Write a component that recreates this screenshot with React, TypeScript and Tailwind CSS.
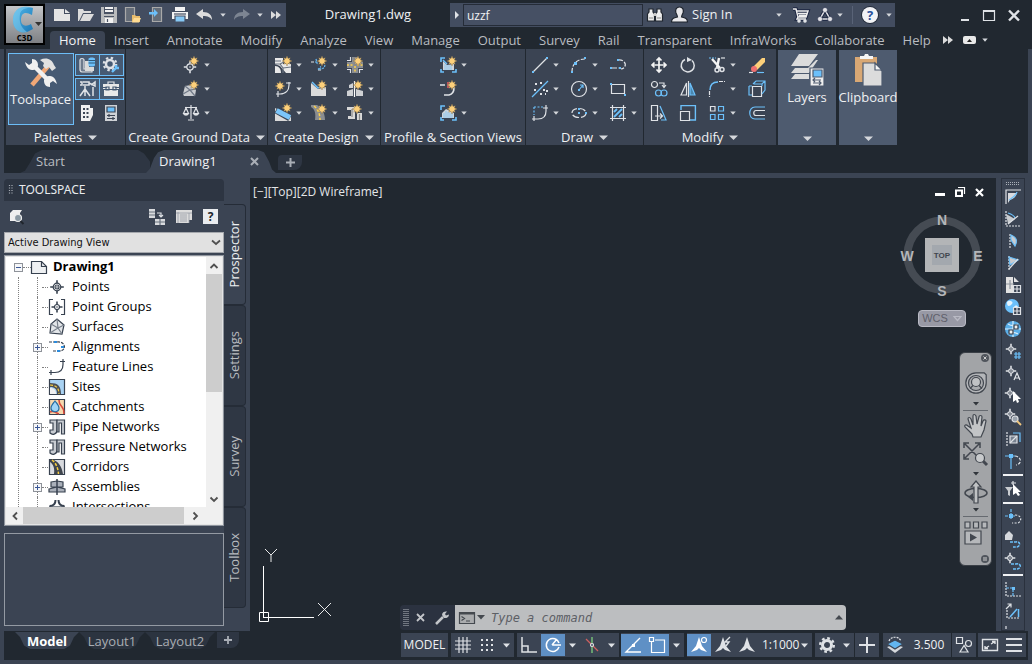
import React from "react";
import clsx from "clsx";

type Kids = { children?: React.ReactNode };

const W = "#dfe2e6";
const B = "#6cc0fa";
const Y = "#fdd07a";

function Svg({ w = 16, h = 16, children }: Kids & { w?: number; h?: number }) {
  return (
    <svg width={w} height={h} viewBox={`0 0 ${w} ${h}`} fill="none" stroke={W} strokeWidth={1.2} className="shrink-0 overflow-visible" aria-hidden="true">
      {children}
    </svg>
  );
}

function Spark({ x = 11, y = 4 }: { x?: number; y?: number }) {
  return (
    <g transform={`translate(${x} ${y})`} stroke="none">
      <path d="M0-5 1-2.4 3.2-3.2 2.4-1 5 0 2.4 1 3.2 3.2 1 2.4 0 5-1 2.4-3.2 3.2-2.4 1-5 0-2.4-1-3.2-3.2-1-2.4Z" fill={Y} stroke="#7d6a48" strokeWidth={0.4} />
    </g>
  );
}

function Caret({ big = false }: { big?: boolean }) {
  return big ? (
    <svg width="9" height="5" viewBox="0 0 9 5" className="shrink-0" aria-hidden="true">
      <path d="M0 .5h9L4.500 5Z" fill="#d5d8dc" />
    </svg>
  ) : (
    <svg width="6" height="4" viewBox="0 0 6 4" className="shrink-0" aria-hidden="true">
      <path d="M.3.5h5.400L3 3.800Z" fill="#d5d8dc" />
    </svg>
  );
}

function IconButton({ label, children, className }: Kids & { label: string; className?: string }) {
  return (
    <button type="button" aria-label={label} className={clsx("flex shrink-0 items-center justify-center", className)}>
      {children}
    </button>
  );
}

/* ---------- shared point marker ---------- */
function Target({ x, y, r = 3, c = W }: { x: number; y: number; r?: number; c?: string }) {
  return (
    <g stroke={c} fill="none" transform={`translate(${x} ${y})`}>
      <circle r={r} />
      <path d={`M0 ${-r - 3}v3M0 ${r}v3M${-r - 3} 0h3M${r} 0h3`} strokeWidth={1.6} />
      <circle r={0.8} fill={c} stroke="none" />
    </g>
  );
}

/* ---------- quick access ---------- */
const quickIcons: { label: string; icon: React.ReactNode }[] = [
  { label: "New", icon: <Svg><path d="M0 2h10v5h6v7H0Z" fill="#e4e4e4" stroke="none" /><path d="m11 2 5 4h-5Z" fill="#e4e4e4" stroke="none" /></Svg> },
  { label: "Open", icon: <Svg><path d="M0 14V2h5l1 2h7v2H5L1 14Z" fill="#dcdcdc" stroke="none" /><path d="M5.500 7H16l-4 7H2Z" fill="#dcdcdc" stroke="none" /></Svg> },
  { label: "Save", icon: <Svg><path d="M0 0h16v16H0Z" fill="#b9bbbd" stroke="none" /><path d="M3 0h10v7H3Z" fill="#4a5364" stroke="none" /><path d="M4 0h8v2H4Zm0 3h8v2H4ZM4 11h8v5H4Z" fill="#f2f2f2" stroke="none" /><path d="M3 9.500h10M6.500 12v3" stroke="#4a5364" /></Svg> },
  { label: "Open from Web and Mobile", icon: <Svg><path d="M.5.500h9v14h-9Z" fill="#656d78" stroke="#a9a9a9" /><path d="M7 8h3l1 1h4v6H7Z" fill="#e9bd6c" stroke="none" /><path d="M9 11h7l-2 4.500H7Z" fill="#ffdc93" stroke="none" /></Svg> },
  { label: "Save to Web and Mobile", icon: <Svg><path d="M3.500.500h9v14h-9Z" fill="#656d78" stroke="#a9a9a9" /><path d="M0 5h5V2l4 4-4 4V7.500H0Z" fill="#6cc0fa" stroke="none" /></Svg> },
  { label: "Plot", icon: <Svg><path d="M3 0h10v4H3ZM0 5h16v7H0Z" fill="#f3f3f3" stroke="none" /><path d="M3 9h10v6H3Z" fill="#86c8f5" stroke="#465064" /><path d="M2 7h12" stroke="#465064" /></Svg> },
  { label: "Undo", icon: <Svg><path d="M0 7 7 2v3c6 0 9 3 9 8-2-3-4-4-9-4v3Z" fill="#dcdcdc" stroke="none" /></Svg> },
  { label: "Undo history", icon: <Caret /> },
  { label: "Redo", icon: <Svg><path d="M16 7 9 2v3C3 5 0 8 0 13c2-3 4-4 9-4v3Z" fill="#7d8592" stroke="none" /></Svg> },
  { label: "Redo history", icon: <Caret /> },
];

function DoubleArrow() {
  return <Svg w={10} h={8}><path d="M0 0 5 4 0 8ZM5 0l5 4-5 4Z" fill="#dcdcdc" stroke="none" /></Svg>;
}

function TitleBar() {
  return (
    <div className="flex h-7 items-center pt-[2px]">
      <div className="flex h-6 w-[241px] shrink-0 items-center justify-between bg-[#434d60] pr-[5px] pl-[9px]">
        {quickIcons.map((q) => (
          <IconButton key={q.label} label={q.label}>{q.icon}</IconButton>
        ))}
        <IconButton label="More commands"><DoubleArrow /></IconButton>
      </div>
      <h1 className="min-w-0 flex-1 text-center text-[13px] text-[#eef0f2]">Drawing1.dwg</h1>
      <div className="flex h-6 w-[445px] shrink-0 items-center bg-[#434d60]">
        <IconButton label="Expand search" className="w-[13px]">
          <Svg w={4} h={8}><path d="M0 0 4 4 0 8Z" fill={W} stroke="none" /></Svg>
        </IconButton>
        <input aria-label="Search" defaultValue="uzzf" className="h-[22px] w-[180px] border border-[#252c38] bg-[#465064] px-[3px] text-[12px] text-[#eef0f2] outline-none" />
        <IconButton label="Find" className="ml-1">
          <Svg w={16}>
            <path d="M2 2h4v3l1.500 2v7H.5V7L2 5ZM10 2h4v3l1.500 2v7H8.500V7L10 5Z" fill="#eee" stroke="#20262f" />
            <path d="M7 6h2v3H7Z" fill="#ccc" stroke="none" /><path d="M2 11h4M10 11h4" stroke="#888" />
          </Svg>
        </IconButton>
        <button type="button" className="ml-2 flex items-center gap-1 text-[13px] text-[#eef0f2]">
          <Svg w={17}><path d="M8.500 0C12 0 13 3 12 6c-1 2-1.500 3-1.500 4 4 1 6 1.500 6 5H.5c0-3.500 2-4 6-5 0-1-.5-2-1.500-4C4 3 5 0 8.500 0Z" fill="#e9e9ec" stroke="#20262f" /></Svg>
          Sign In
        </button>
        <div className="ml-auto flex items-center">
          <IconButton label="Account menu"><Caret /></IconButton>
          <IconButton label="App store" className="ml-[10px]">
            <Svg w={17}><path d="M1 2h3l2 8h8l2-6H5M6 10l-1 2h9" stroke="#1b2440" strokeWidth={3.500} /><path d="M1 2h3l2 8h8l2-6H5M6 10l-1 2h9M6 6.500h9M7 8.500h7" stroke="#eee" strokeWidth={1.500} /><circle cx="7" cy="14" r="1.200" fill="#eee" /><circle cx="13" cy="14" r="1.200" fill="#eee" /></Svg>
          </IconButton>
          <IconButton label="Stay connected" className="ml-2">
            <Svg w={16}><path d="m8 3-5 9h10Z" stroke="#1b2440" strokeWidth={3.500} /><path d="m8 3-5 9h10Z" stroke="#e4e4e8" strokeWidth={1.500} /><g fill="#e4e4e8" stroke="#1b2440" strokeWidth=".5"><circle cx="8" cy="3" r="2.500" /><circle cx="3" cy="12" r="2.500" /><circle cx="13" cy="12" r="2.500" /></g></Svg>
          </IconButton>
          <IconButton label="Connection menu" className="ml-1"><Caret /></IconButton>
          <span className="mx-[9px] h-[18px] w-px bg-[#596377]" />
          <IconButton label="Help" className="h-4 w-4 rounded-full bg-[#f2f3f6] text-[13px] leading-none font-bold text-[#27509c] ring-1 ring-[#232b3a]">?</IconButton>
          <IconButton label="Help menu" className="mr-[3px] ml-2"><Caret /></IconButton>
        </div>
      </div>
      <div className="ml-[66px] flex shrink-0 items-center gap-[13px] pr-3">
        <IconButton label="Minimize"><Svg w={9} h={12}><path d="M0 11h8" strokeWidth={2} /></Svg></IconButton>
        <IconButton label="Maximize"><Svg w={12} h={11}><path d="M.5 0v10.500h11V0" /><path d="M0 1h12" strokeWidth={2} /></Svg></IconButton>
        <IconButton label="Close"><Svg w={12} h={11}><path d="m1 .5 10 10M11 .5l-10 10" strokeWidth={2.400} /></Svg></IconButton>
      </div>
    </div>
  );
}

const ribbonTabs = ["Home", "Insert", "Annotate", "Modify", "Analyze", "View", "Manage", "Output", "Survey", "Rail", "Transparent", "InfraWorks", "Collaborate", "Help"];

function RibbonTabs() {
  return (
    <nav className="flex h-[21px] items-end pl-[5px] text-[13px]">
      {ribbonTabs.map((t, i) => (
        <button
          type="button"
          key={t}
          className={clsx("h-[18px] shrink-0 px-[9px] leading-[17px]", i === 0 ? "rounded-t-sm bg-[#3b4453] text-[#f2f3f5]" : "text-[#b9bcc0]")}
        >
          {t}
        </button>
      ))}
      <div className="ml-[3px] flex h-[18px] items-center gap-[10px] pb-px">
        <IconButton label="More tabs"><DoubleArrow /></IconButton>
        <IconButton label="Ribbon display"><Svg w={13} h={8}><rect width="13" height="8" rx="2" fill="#e8e8e8" stroke="none" /><path d="M4 6h5L6.500 3Z" fill="#222" stroke="none" /></Svg></IconButton>
        <IconButton label="Ribbon display menu" className="-ml-1"><Caret /></IconButton>
      </div>
    </nav>
  );
}

/* ---------- ribbon icons ---------- */
const ic = {
  points: <Svg><Target x={7} y={10} r={3.200} /><Spark x={11} y={4} /></Svg>,
  surface: <Svg><path d="m0 13 2-8 6-1 5 5-1 6H1Z" fill="#c9ccd0" stroke="none" /><path d="m0 13 7-4 5 6M2 5l5 4 6-1" stroke="#707987" /><Spark x={11} y={4} /></Svg>,
  scales: <Svg><path d="M8 0v14M2 2.500h12M5 15h6M3 3 .5 8.500h5ZM13 3l-2.500 5.500h5Z" /><path d="M0 8.500h6c-1 3-5 3-6 0ZM10 8.500h6c-1 3-5 3-6 0Z" fill={W} stroke="none" /></Svg>,
  parcel: <Svg><path d="M0 1h8v6h8v9h-5L5 9 0 7Z" fill="#e8e8e8" stroke="none" /><path d="M0 7h5l3 4v5M0 4h6M5 7l4-2M8 11l8-1" stroke="#6b7482" /><path d="M0 9c4 0 6 3 6 7H0Z" fill="#e8e8e8" stroke="none" /><Spark x={12} y={4} /></Svg>,
  featureNew: <Svg><path d="M1 13h4c6 0 9-4 9-9V1M3 10v6M11 2h5" /><Spark x={5} y={5} /></Svg>,
  grading: <Svg><path d="M0 3 16 11v5H0Z" fill="#dadada" stroke="none" /><path d="m1 5 14 8" stroke="#3b4453" strokeWidth={7} /><path d="m1.500 5.500 13.500 7" stroke="#7cc6fa" strokeWidth={5} /><Spark x={12} y={3} /></Svg>,
  alignment: <Svg><path d="M0 5h3M7 13h3" /><path d="M4 5h3M5 2l1.500 6M8 12c4 0 6-1 6-5M7 12.500l3-3" stroke={B} strokeDasharray="2 1" /><Spark x={11} y={4} /></Svg>,
  profile: <Svg><path d="M0 2l7 6 8-2v9H0Z" fill="#dadada" stroke="none" /><path d="m1 1 6 6 6-4" stroke={B} strokeWidth={1.500} /><Spark x={11} y={4} /></Svg>,
  corridor: <Svg><path d="M0 0h6c5 3 8 8 8 15H4C5 9 4 4 0 2Z" fill="#8a8d91" stroke="none" /><path d="M3 1c4 3 6 8 6 14" stroke="#fdd04a" strokeDasharray="3 1.500" strokeWidth={1.500} /><Spark x={11} y={4} /></Svg>,
  cross: <Svg><path d="M5 0h6v16H5ZM0 5h16v6H0Z" fill="#8a8d91" stroke="none" /><path d="M0 3.500h3.500V0M12.500 16v-3.500H16M3.500 16v-3.500H0" /><path d="M8 9v7M0 8h7M10 8h6" stroke="#fdd04a" strokeDasharray="2 1.500" strokeWidth={1.500} /><Spark x={11} y={4} /></Svg>,
  assembly: <Svg><path d="M2 4l4-2v5H2ZM0 10l6-2v7H0ZM9 8l7 2v5H9Z" fill="#cfd1d4" stroke="none" /><path d="M7.500 0v16" stroke="#fff" /><Spark x={11} y={4} /></Svg>,
  pipes: <Svg><path d="M0 2h8v12H1v-3h3V5H0ZM10 8h5v7h-5Z" fill="#d9d9d9" stroke="none" /><path d="M5 4v8M12.500 9v6" stroke="#888" /><Spark x={10} y={4} /></Svg>,
  profView: <Svg><path d="M1 5V1h4M1 12v3h3M12 15h4v-3" stroke={B} strokeWidth={1.600} /><path d="m3 4 4 4 7-1v6H3Z" fill="#d0d5da" stroke="none" /><path d="M5 7v6M7 8v5M9 8v5M11 8v5" stroke={B} strokeWidth={0.700} /><path d="m3 3 4 4" stroke={B} /><Spark x={12} y={4} /></Svg>,
  sample: <Svg><path d="M0 4h5M14 7c0 4-1 6-5 7H4" strokeWidth={1.600} /><path d="M8 1v6" stroke="#e0585d" strokeWidth={1.600} /><Spark x={12} y={4} /></Svg>,
  section: <Svg><path d="M1 5V1h4M1 12v3h3M12 15h4v-3" stroke={B} strokeWidth={1.600} /><path d="M2 13V8l4-4 8 4v5Z" fill="#d0d5da" stroke="none" /><path d="M4 8v5M6 6v7M8 7v6M10 8v5M12 8v5" stroke={B} strokeWidth={0.700} /><Spark x={12} y={4} /></Svg>,
  line: <Svg><path d="M1 15 15 1" /><path d="M0 14h2v2H0ZM14 0h2v2h-2Z" fill={B} stroke="none" /></Svg>,
  points3: <Svg><path d="M0 16 16 0" stroke={B} /><path d="M2 8h2v2H2Zm6-7h2v2H8Zm-5 1h2v2H3Zm8 6h2v2h-2Zm3 1h2v2h-2ZM8 12h2v2H8Zm5 0h1v2h-1Z" fill={W} stroke="none" /></Svg>,
  fillet0: <Svg><path d="M2 2v8M2 2h9" stroke={B} strokeDasharray="2 1.500" /><path d="M0 14h6c5 0 8-3 8-8V0M11 3h5M2 11v5" /></Svg>,
  arc: <Svg><path d="M1 15C1 7 6 2 14 2" strokeDasharray="4 1.500" /><path d="M0 14h2v2H0ZM3 5h3v3H3Zm10-5h2v2h-2Z" fill={B} stroke="none" /></Svg>,
  circle: <Svg><circle cx="8" cy="8" r="7.500" /><path d="m8 9 4-5M9 4h3v3" stroke={B} /><path d="M7 8h2v2H7Z" fill={B} stroke="none" /></Svg>,
  ellipse: <Svg><ellipse cx="8" cy="8" rx="7" ry="4.500" strokeDasharray="7 2" /><path d="M7 3h2v2H7Zm0 4h2v2H7Zm7 0h2v2h-2Z" fill={B} stroke="none" /></Svg>,
  polyline: <Svg><path d="M2 11h9M8 3c8-1 10 8 3 9" strokeDasharray="5 1.500" /><path d="M0 10h2v2H0Zm9 0h2v2H9ZM7 2h2v2H7Z" fill={B} stroke="none" /></Svg>,
  rect: <Svg><path d="M1.500 3.500h13v9h-13Z" /><path d="M0 2h2v2H0Zm14 11h2v2h-2Z" fill={B} stroke="none" /></Svg>,
  hatch: <Svg><path d="M2.500 0v16M13.500 0v16M0 2.500h16M0 13.500h16" /><path d="m4 7 3-3M4 12l8-8M9 12l3-3" stroke={B} strokeWidth={1.800} /></Svg>,
  move: <Svg><path d="M8 1v14M1 8h14M5.500 3.500 8 1l2.500 2.500M5.500 12.500 8 15l2.500-2.500M3.500 5.500 1 8l2.500 2.500M12.500 5.500 15 8l-2.500 2.500" stroke="#f4f4f4" strokeWidth={1.700} /></Svg>,
  rotate: <Svg><path d="M5 2.500a6.500 6.500 0 1 0 7 1" strokeWidth={1.500} /><path d="m7 0 5 3-5 2Z" fill={W} stroke="none" /></Svg>,
  trim: <Svg><path d="M0 1h7" stroke={B} strokeDasharray="2 1" /><path d="M12 1h4" /><path d="M3 2l8 9M10 1l-2 10" stroke="#f4f4f4" strokeWidth={2.400} /><circle cx="8" cy="13" r="2" strokeWidth={1.500} /><circle cx="13" cy="12.500" r="2" strokeWidth={1.500} /></Svg>,
  erase: <Svg><path d="m4 10 9-9 3 0v4l-8 8Z" fill="#fdd07a" stroke="none" /><circle cx="5" cy="12" r="3" fill="#ee6f70" stroke="none" /><path d="M0 15.500h4" /><path d="M8 15.500h7" stroke={B} /></Svg>,
  copy: <Svg><circle cx="3.500" cy="3.500" r="3" /><path d="M8 2h5v4M11 4l2 2.500L15 4" /><circle cx="7.500" cy="12" r="3" stroke={B} /><circle cx="13" cy="12" r="3" stroke={B} /></Svg>,
  mirror: <Svg><path d="M6.500 2 1 14h5.500ZM8.500 0v16" /><path d="m10 2 5 12h-5Z" stroke={B} fill="#4b86ad" /></Svg>,
  filletM: <Svg><path d="M1 9C1 4 4 1 9 1" stroke={B} strokeWidth={1.500} /><path d="M10 .5h6M.5 10v6" strokeDasharray="4 1" /></Svg>,
  explode: <Svg><path d="M3.500 5.500h9v10h-9Z" /><path d="M0 5h3M0 5v9h3M4 3l3-3h9v9l-3 4M5 3h8l3-3M13 3v2" stroke={B} /></Svg>,
  stretch: <Svg><path d="M.5.500h6v15h-6ZM4 11h7M9 8.500l2.500 2.500L9 13.500" /><path d="m9 1 6 14h-5" stroke={B} /></Svg>,
  scale: <Svg><path d="M1 5V.6h14.400V15H10" stroke={B} strokeWidth={1.400} /><path d="M.5 6.500h9v9h-9Z" /></Svg>,
  array: <Svg w={16}><path d="M1.500 1.500h4.500v4.500h-4.500Z" /><path d="M9.500 1.500h5v4.500h-5ZM1.500 9.500h4.500v5h-4.500ZM9.500 9.500h5v5h-5Z" stroke={B} /></Svg>,
  offset: <Svg><path d="M16 2H6C-1 2-1 14 6 14h10" stroke={B} /><path d="M16 5.500H7c-3 0-3 5 0 5h9" /></Svg>,
  planset: <Svg><path d="M1 3c0-2 4-2 4 0v9h8v3H3c-2 0-2-2-2-3Z" stroke={W} fill="#6d7a8c" /><path d="M6 4h4v6h5v4H6Z" fill="#dadada" stroke="none" /><path d="M9.500 2c0-2 6.500-2 6.500 0v6c0 2-6.500 2-6.500 0Z" fill={B} stroke="none" /><path d="M9.500 3.500h6.500M9.500 6h6.500" stroke="#315a7a" /></Svg>,
  gear: <Svg><circle cx="7" cy="7" r="4" strokeWidth={2.500} /><circle cx="7" cy="7" r="6.200" strokeWidth={2.200} strokeDasharray="2.400 2.470" /><path d="m9 15 5-5M13 8v3h3" stroke={B} strokeWidth={2.400} /></Svg>,
  survey: <Svg><path d="M1 1h2v3H1M4 1h6v3H4M6 5v3M6 8 1 15M6 8l5 7M6 8v7M10 2l6 3V1l-4 3M14 6v9" strokeWidth={1.500} /></Svg>,
  toolbox: <Svg><path d="M5 3V1h6v2" /><path d="M0 3h16v5H0ZM1 9h14v6H1Z" fill="#e8e8e8" stroke="none" /><path d="M0 6.500h4M12 6.500h4M3 6h3v3H3ZM10 6h3v3h-3Z" stroke="#465a73" /></Svg>,
  report: <Svg><path d="M2 0h9v3h3v7l-3 6H2Z" fill="#f0f0f0" stroke="none" /><path d="M4 4h2M7.500 4h2M4 8h2M7.500 8h2M4 12h2M7.500 12h2" stroke="#3b4453" strokeWidth={2} /></Svg>,
  props: <Svg><path d="M2 0h12v16H2Z" fill="#cfd2d6" stroke="none" /><path d="M4 2h8v5H4Z" fill={B} stroke="#3b4453" /><path d="M4 10.500h8M4 13.500h8M6 9v3M10 12v3" stroke="#3b4453" /></Svg>,
};

type Tool = { name: string; icon: React.ReactNode; menu?: boolean };

function ToolCell({ tool }: { tool: Tool }) {
  return (
    <div className="flex h-6 items-center gap-[5px]">
      <IconButton label={tool.name}>{tool.icon}</IconButton>
      {tool.menu && <IconButton label={`${tool.name} options`}><Caret /></IconButton>}
    </div>
  );
}

function Panel({ title, menu = true, children, className }: Kids & { title: string; menu?: boolean; className?: string }) {
  return (
    <section className={clsx("flex h-24 shrink-0 flex-col bg-[#3b4453] pt-1", className)}>
      <div className="flex h-[72px] justify-center">{children}</div>
      <button type="button" className="flex h-5 items-center justify-center gap-[6px] pt-1 text-[13px] leading-4 whitespace-nowrap text-[#eef0f2]">
        {title}
        {menu && <Caret big />}
      </button>
    </section>
  );
}

const t = (name: string, icon: React.ReactNode, menu = true): Tool => ({ name, icon, menu });

const ground = [[t("Points", ic.points), t("Surfaces", ic.surface), t("Traverse", ic.scales)]];
const design = [
  [t("Parcel", ic.parcel), t("Feature Line", ic.featureNew), t("Grading", ic.grading)],
  [t("Alignment", ic.alignment), t("Profile", ic.profile), t("Corridor", ic.corridor)],
  [t("Intersections", ic.cross), t("Assembly", ic.assembly), t("Pipe Network", ic.pipes)],
];
const views = [[t("Profile View", ic.profView), t("Sample Lines", ic.sample, false), t("Section Views", ic.section)]];
const draw = [
  [t("Line", ic.line), t("Construction", ic.points3), t("Polycurve", ic.fillet0)],
  [t("Arc", ic.arc), t("Circle", ic.circle), t("Ellipse", ic.ellipse)],
  [t("Polyline", ic.polyline, false), t("Rectangle", ic.rect), t("Hatch", ic.hatch)],
];
const modify = [
  [t("Move", ic.move, false), t("Copy", ic.copy, false), t("Stretch", ic.stretch, false)],
  [t("Rotate", ic.rotate, false), t("Mirror", ic.mirror, false), t("Scale", ic.scale, false)],
  [t("Trim", ic.trim), t("Fillet", ic.filletM), t("Array", ic.array)],
  [t("Erase", ic.erase, false), t("Explode", ic.explode, false), t("Offset", ic.offset, false)],
];

function ToolColumns({ columns, className }: { columns: Tool[][]; className?: string }) {
  return (
    <div className={clsx("flex", className)}>
      {columns.map((col, i) => (
        <div key={i}>{col.map((tool) => <ToolCell key={tool.name} tool={tool} />)}</div>
      ))}
    </div>
  );
}

function SmallTool({ label, on, children }: Kids & { label: string; on?: boolean }) {
  return (
    <IconButton label={label} className={clsx("-ml-px h-[22px] w-[25px]", on && "border border-[#6cbdf7] bg-[#465a73]")}>
      {children}
    </IconButton>
  );
}

function TallPanel({ title, children }: Kids & { title: string }) {
  return (
    <button type="button" className="flex h-[95px] w-[58px] shrink-0 flex-col items-center bg-[#4e5b6f] pt-1 pb-1 text-[13px] text-[#eef0f2]">
      {children}
      <span className="mt-px leading-5">{title}</span>
      <span className="mt-auto"><Caret big /></span>
    </button>
  );
}

function Ribbon() {
  return (
    <div className="flex gap-px border-x-4 border-[#3b4453] pl-[2px]">
      <Panel title="Palettes" className="w-[119px]">
        <button type="button" className="flex w-[66px] flex-col items-center border border-[#6cbdf7] bg-[#465a73] pt-[3px] text-[13px] text-[#eef0f2]">
          <Svg w={32} h={32}>
            <path d="M7 28 24 8" stroke="#f1a877" strokeWidth={4.500} />
            <path d="M15 3c6-3 12-1 14 5l2 3-4 3-3-4-3 2-3-3 1-3Z" fill="#e1e1e1" stroke="none" />
            <path d="m8 8 16 16" stroke="#f0f0f0" strokeWidth={4.500} />
            <path d="M0 5l4 3 3-2 0-4c4 0 6 3 6 6 0 3-3 5-6 5-4 0-6-4-7-8ZM32 27l-4-3-3 2 0 4c-4 0-6-3-6-6 0-3 3-5 6-5 4 0 6 4 7 8Z" fill="#f0f0f0" stroke="none" />
          </Svg>
          <span className="leading-5">Toolspace</span>
        </button>
        <div className="ml-[2px] grid grid-cols-2 content-start gap-y-[2px] pt-px">
          <SmallTool label="Sheet set" on>{ic.planset}</SmallTool>
          <SmallTool label="Settings" on>{ic.gear}</SmallTool>
          <SmallTool label="Survey" on>{ic.survey}</SmallTool>
          <SmallTool label="Toolbox" on>{ic.toolbox}</SmallTool>
          <SmallTool label="Panorama">{ic.report}</SmallTool>
          <SmallTool label="Properties">{ic.props}</SmallTool>
        </div>
      </Panel>
      <Panel title="Create Ground Data" className="w-[141px]"><ToolColumns columns={ground} /></Panel>
      <Panel title="Create Design" className="w-[112px]"><ToolColumns columns={design} className="gap-[9px]" /></Panel>
      <Panel title="Profile & Section Views" menu={false} className="w-[144px]"><ToolColumns columns={views} /></Panel>
      <Panel title="Draw" className="w-[117px]"><ToolColumns columns={draw} className="gap-3" /></Panel>
      <Panel title="Modify" className="w-[132px]"><ToolColumns columns={modify} className="gap-[13px] pr-1" /></Panel>
      <div className="flex gap-[3px] pt-px pl-px">
        <TallPanel title="Layers">
          <Svg w={33} h={32}>
            <path d="M8 0h19l-9 12H0ZM4 14l-4 5h18l9-13h-2L17 14ZM4 20l-4 5h18V20Z" fill="#dcdcdc" stroke="none" />
            <path d="M19 14h14v18H19Z" fill="#eee" stroke="#4e5b6f" />
            <path d="M22 16h9v7h-9Z" fill={B} stroke="#4e5b6f" />
            <path d="M22 26h8M22 29h8M24 24l-2 2 2 2M28 27l2 2-2 2" stroke="#4e5b6f" />
          </Svg>
        </TallPanel>
        <TallPanel title="Clipboard">
          <Svg w={27} h={32}>
            <path d="M0 3h22v25H0Z" fill="#d9a874" stroke="none" /><path d="M5 5V2h4l1-2h3l1 2h4v3Z" fill="#f5f5f5" stroke="none" />
            <path d="M8 9h12l7 8v15H8Z" fill="#dcdcdc" stroke="#4e5b6f" /><path d="M20 9v7h7Z" fill="#f7f7f7" stroke="#4e5b6f" />
          </Svg>
        </TallPanel>
      </div>
    </div>
  );
}

/* ---------- drawing tabs ---------- */
function FileTabs() {
  return (
    <div className="mx-1 flex h-7 items-end bg-[#212830] pl-4 text-[13px]">
      <button type="button" className="h-[23px] w-[130px] bg-[#2e3643] pl-4 text-left text-[#b9bcc0] [clip-path:polygon(0_100%,5px_90%,10px_55%,15px_15%,22px_0,118px_0,124px_15%,130px_50%,130px_100%)]">Start</button>
      <div className="-ml-1 flex h-[23px] w-[130px] items-center bg-[#3b4453] pl-[13px] text-[#f0f1f3] [clip-path:polygon(0_100%,4px_80%,8px_35%,12px_10%,18px_0,112px_0,118px_10%,123px_50%,126px_85%,130px_100%)]">
        <button type="button" className="flex-1 text-left">Drawing1</button>
        <IconButton label="Close drawing" className="mr-[17px]"><Svg w={9} h={9}><path d="m1 1 7 7M8 1 1 8" stroke="#a9aeb6" strokeWidth={2} /></Svg></IconButton>
      </div>
      <IconButton label="New tab" className="mb-[3px] ml-[2px] h-[15px] w-6 rounded-tl rounded-br-lg bg-[#2e3643]"><Svg w={9} h={9}><path d="M4.500 0v9M0 4.500h9" stroke="#a9aeb6" strokeWidth={2} /></Svg></IconButton>
    </div>
  );
}

/* ---------- toolspace ---------- */
const K = "#37414f";
const treeItems: { label: string; box?: boolean; icon: React.ReactNode }[] = [
  { label: "Points", icon: <Svg><Target x={8} y={8} r={3.800} c={K} /><circle cx="8" cy="8" r="2" stroke={K} /></Svg> },
  { label: "Point Groups", icon: <Svg><path d="M4 .5H.5v15H4M12 .5h3.500v15H12" stroke={K} /><Target x={8} y={8} r={2.500} c={K} /></Svg> },
  { label: "Surfaces", icon: <Svg><path d="m1 14 1-9 6-5 7 6-2 9Z" fill="#e3e6e9" stroke={K} /><path d="m8 0 1 9-8 5M9 9l4 6M9 9l6-3M2 5l7 4" stroke="#79818c" /></Svg> },
  { label: "Alignments", box: true, icon: <Svg><path d="M0 3h6M8 3c9-1 10 9 2 9M4 12h6" stroke={K} strokeDasharray="3 1" /><path d="M5 2h3v2H5Zm7 5h3v2h-3ZM8 11h3v2H8Z" fill="#2b8bdc" stroke="none" /></Svg> },
  { label: "Feature Lines", icon: <Svg><path d="M0 13.500h6c5 0 8-3 8-8V0M11 2.500h5M2 11v5" stroke={K} /></Svg> },
  { label: "Sites", icon: <Svg><path d="M.5.500h15v15H.5Z" fill="#a9d2f2" stroke={K} /><path d="M1 4c8 0 11 3 11 11H8c0-5-2-7-7-7Z" fill="#4a4f57" stroke="none" /><path d="M1 6c6 0 9 3 9 9" stroke="#f7cd3e" strokeDasharray="3 1.500" /><path d="M1 9c4 0 6 2 6 6H1Z" fill="#f0f0f0" stroke="none" /></Svg> },
  { label: "Catchments", icon: <Svg><path d="M.5.500h15v15H.5Z" fill="#f6d9ae" stroke={K} /><path d="M10 1c0 8 5 4 5 14M1 13c4-2 6 1 9 2" stroke="#d94b3d" strokeWidth={1.600} /><path d="M6 2c3 4 4 5 4 7 0 5-8 5-8 0 0-2 1-3 4-7Z" fill="#9fd4f6" stroke="#246ca2" /></Svg> },
  { label: "Pipe Networks", box: true, icon: <PipeIcon /> },
  { label: "Pressure Networks", icon: <PipeIcon /> },
  { label: "Corridors", icon: <Svg><path d="M.5.500h15v15H.5Z" fill="#d8dade" stroke={K} /><path d="M1 1h4c6 3 8 8 9 14H5C6 9 4 5 1 3Z" fill="#3f454e" stroke="none" /><path d="M3 1c4 3 6 8 6.500 14" stroke="#f7cd3e" strokeDasharray="3 1.500" strokeWidth={1.500} /></Svg> },
  { label: "Assemblies", box: true, icon: <Svg><path d="M2 3l6-1 6 1v5H2ZM0 10l8-2 8 2v3H0Z" fill="#aab0ba" stroke={K} /><path d="M8 0v16" stroke={K} strokeWidth={1.500} /></Svg> },
  { label: "Intersections", icon: <Svg><path d="M6.500 1c0 4-2 6-6 6M9.500 1c0 4 2 6 6 6" stroke={K} strokeWidth={2} /><path d="M0 8h16" stroke={K} /></Svg> },
];

function PipeIcon() {
  return (
    <Svg>
      <path d="M1 1h7v10c0 5-5 5-7 3v-3h3V4H1Z" fill="#c8ccd2" stroke={K} />
      <path d="M8 1h7.500v14h-3V4H10v9H8Z" fill="#c8ccd2" stroke={K} />
    </Svg>
  );
}

function Expander({ open = false }: { open?: boolean }) {
  return (
    <IconButton label={open ? "Collapse" : "Expand"} className="z-10 h-[9px] w-[9px] border border-[#8e9299] bg-[#f6f7f9]">
      <svg width="5" height="5" viewBox="0 0 5 5" aria-hidden="true"><path d={open ? "M0 2.500h5" : "M0 2.500h5M2.500 0v5"} stroke="#3a5796" /></svg>
    </IconButton>
  );
}

function Chevron({ d }: { d: string }) {
  return <Svg w={8} h={8}><path d={d} stroke="#505050" strokeWidth={1.800} /></Svg>;
}

function Tree() {
  return (
    <div className="grid h-[271px] grid-cols-[1fr_16px] grid-rows-[1fr_17px] border-2 border-[#e4e4e4] bg-white text-[13px] text-black outline-1 -outline-offset-1 outline-[#8f959e]">
      <div className="min-h-0 overflow-hidden">
        <div className="flex h-5 items-center pl-2">
          <Expander open />
          <span className="w-2 border-t border-dotted border-[#808080]" />
          <Svg w={16} h={13}><path d="M.5.500h10l5 5v7H.5Z" fill="#eef0f2" stroke={K} /><path d="M10.500.500v5h5" stroke={K} /></Svg>
          <span className="ml-[6px] font-bold">Drawing1</span>
        </div>
        <ul className="ml-3 border-l border-dotted border-[#808080]">
          {treeItems.map((item) => (
            <li key={item.label} className="ml-[18px] flex h-5 items-center border-l border-dotted border-[#808080]">
              {item.box ? <span className="-ml-[5px] flex"><Expander /></span> : <span className="w-1" />}
              <span className="w-[6px] border-t border-dotted border-[#808080]" />
              <span className="ml-px">{item.icon}</span>
              <span className="ml-[7px] whitespace-nowrap">{item.label}</span>
            </li>
          ))}
        </ul>
      </div>
      <div className="flex flex-col items-center bg-[#f0f0f0]">
        <IconButton label="Scroll up" className="h-[17px] w-full"><Chevron d="M.5 6 4 2.500 7.500 6" /></IconButton>
        <span className="h-[118px] w-full bg-[#cdcdcd]" />
        <IconButton label="Scroll down" className="mt-auto h-[17px] w-full"><Chevron d="M.5 2.500 4 6l3.500-3.500" /></IconButton>
      </div>
      <div className="flex items-center bg-[#f0f0f0]">
        <IconButton label="Scroll left" className="h-full w-[17px]"><Chevron d="M6 .5 2.500 4 6 7.500" /></IconButton>
        <span className="h-full flex-1 bg-[#cdcdcd]" />
        <IconButton label="Scroll right" className="h-full w-[22px]"><Chevron d="M2.500.5 6 4 2.500 7.500" /></IconButton>
      </div>
      <span className="bg-[#f0f0f0]" />
    </div>
  );
}

const sideTabs = ["Prospector", "Settings", "Survey", "Toolbox"];

function Toolspace() {
  return (
    <aside className="flex w-[246px] shrink-0 pt-[6px] pl-1">
      <div className="flex w-[220px] flex-col">
        <header className="flex h-[22px] items-center gap-[6px] rounded-t bg-[#2d3542] pl-[5px] font-['Noto_Sans',sans-serif] text-[12px] text-[#e8eaed]">
          <Svg w={4} h={10}><path d="M.5 0v10M3 0v10" stroke="#aaafb7" strokeDasharray="1 1.500" /></Svg>
          TOOLSPACE
        </header>
        <div className="flex h-[31px] items-center pr-[6px] pl-[5px]">
          <IconButton label="Preview">
            <Svg><path d="m1 4 3-3h9l-2 3v8H1Z" fill="#f0f0f0" stroke="none" /><circle cx="9" cy="9" r="3.500" fill="#8b99a3" stroke="#eee" /><path d="m11.500 12 3 3" stroke="#20252c" strokeWidth={2} /></Svg>
          </IconButton>
          <div className="ml-auto flex items-center gap-[11px]">
            <IconButton label="Item view"><Svg><path d="M0 0h6v9H0ZM6 10h10v6H6Z" fill="#d8dadd" stroke="none" /><path d="M0 3h6M0 6h6M6 13h10M11 10v6" stroke="#69727f" /><path d="M8 4h4v4M10 6l2 2 2-2" /></Svg></IconButton>
            <IconButton label="Panorama"><Svg><path d="M0 1h16v10h-3v3H0Z" fill="#dcdcdc" stroke="none" /><path d="M2 3v11M0 4h16M13 4v10M4 6h7M4 8h7M4 10h7M4 12h7" stroke="#949aa3" strokeWidth={0.800} /></Svg></IconButton>
            <IconButton label="Toolspace help" className="h-[15px] w-[15px] bg-[#e9ecef] text-[12px] leading-none font-bold text-[#20252c]">?</IconButton>
          </div>
        </div>
        <div className="relative">
          <select aria-label="Drawing view" className="block h-[21px] w-full appearance-none border border-[#a5a8ad] bg-[#e1e1e1] pt-px pl-[3px] font-['DejaVu_Sans_Condensed',sans-serif] text-[11px] text-[#111] outline-none">
            <option>Active Drawing View</option>
          </select>
          <span className="pointer-events-none absolute top-[6px] right-1"><Chevron d="M0 2.500 4 6l4-3.500" /></span>
        </div>
        <div className="mt-[2px]"><Tree /></div>
        <div className="mt-[7px] mb-[5px] flex-1 border border-[#949aa3]" />
      </div>
      <div className="flex w-[22px] flex-col pt-[25px]">
        {sideTabs.map((s, i) => (
          <button
            type="button"
            key={s}
            className={clsx(
              "flex h-[101px] items-center justify-center rounded-r border border-l-0 border-[#252c37] text-[13px]",
              i === 0 ? "bg-[#3b4453] text-[#eef0f2]" : "bg-[#2f3744] text-[#b9bcc0]",
            )}
          >
            <span className="rotate-180 [writing-mode:vertical-rl]">{s}</span>
          </button>
        ))}
      </div>
    </aside>
  );
}

/* ---------- canvas overlays ---------- */
function ViewCube() {
  return (
    <div className="absolute top-[37px] right-3 flex w-[84px] flex-col items-center font-['Liberation_Sans',sans-serif]">
      <svg width="84" height="84" viewBox="0 0 84 84" className="overflow-visible" role="img" aria-label="View cube">
        <circle cx="42" cy="40" r="34.500" fill="none" stroke="#454b53" strokeWidth="8" />
        <rect x="25" y="23" width="34" height="34" fill="#b3b5b7" />
        <rect x="32" y="30" width="20" height="20" fill="#a3a8ae" />
        <text x="42" y="43" textAnchor="middle" fontSize="8" fontWeight="700" fill="#3f454d">TOP</text>
        <g fill="#b4b6b9" fontSize="14" fontWeight="700" textAnchor="middle">
          <text x="42" y="10">N</text><text x="78" y="46">E</text><text x="42" y="81">S</text><text x="7" y="46">W</text>
        </g>
      </svg>
      <button type="button" className="mt-[11px] flex h-[17px] w-12 items-center justify-center gap-[5px] rounded border border-[#b9bac4] bg-[#9899a5] text-[11px] text-[#5f606b]">
        WCS
        <Svg w={9} h={5}><path d="M1 .5h7L4.500 4.500Z" stroke="#b9bac4" /></Svg>
      </button>
    </div>
  );
}

function NavCaret() {
  return <Svg w={6} h={4}><path d="M0 0h6L3 3.500Z" fill="#30353b" stroke="none" /></Svg>;
}

function NavBar() {
  const s = "#42474f";
  return (
    <div className="absolute top-[174px] right-1 flex h-[214px] w-[33px] flex-col items-center rounded-md border border-[#3b4047] bg-[#a2a4a7]">
      <IconButton label="Close navigation bar" className="mt-px mr-[2px] self-end"><Svg w={8} h={8}><circle cx="4" cy="4" r="4" fill="#50555c" stroke="none" /><path d="m2.500 2.500 3 3m0-3-3 3" stroke="#ddd" strokeWidth={0.900} /></Svg></IconButton>
      <IconButton label="Steering wheel" className="mt-[10px]"><Svg w={22} h={22}><path d="M11 .8h8.200l2 2V11A10.200 10.200 0 1 1 11 .8Z" fill="#b4b6b9" stroke={s} /><circle cx="11" cy="11" r="7.500" fill="#a9abae" stroke={s} /><circle cx="11" cy="10" r="4.500" fill="#c0c2c4" stroke={s} /><path d="m8 13.500-3 3M14 13.500l3 3" stroke={s} /></Svg></IconButton>
      <IconButton label="Wheel menu" className="mt-2"><NavCaret /></IconButton>
      <span className="mt-1 h-px w-[25px] bg-[#666a70]" />
      <IconButton label="Pan" className="mt-[3px]"><Svg w={24} h={24}><path d="M8 20 1 13c-1-2 1-3 3-1l3 2L4 5c0-2 2-2 3 0l2 6L9 2c0-2 2-2 3 0l1 8 2-7c0-2 3-2 3 0l-1 9 2-5c1-2 3-1 3 0l-2 9-3 7H9Z" fill="#c2c4c6" stroke={s} /></Svg></IconButton>
      <IconButton label="Zoom extents" className="mt-[5px]"><Svg w={24} h={24}><path d="m1 1 14 14M15 1 1 15M0 5V0h5M11 0h5v5M0 11v5h5" stroke={s} strokeWidth={1.500} /><path d="m19 18 4 4" stroke={s} strokeWidth={3} /><circle cx="16" cy="15" r="4.500" fill="#c8cacc" stroke={s} /></Svg></IconButton>
      <IconButton label="Zoom menu" className="mt-[5px]"><NavCaret /></IconButton>
      <IconButton label="Orbit" className="mt-1"><Svg w={24} h={24}><ellipse cx="12" cy="13" rx="11" ry="4.500" stroke={s} strokeWidth={1.500} /><path d="M10 23V7H7l5-6 5 6h-3v16Z" fill="#c0c2c4" stroke={s} /><path d="m9 13-5 4 5 4" fill={s} stroke="none" /></Svg></IconButton>
      <IconButton label="Orbit menu" className="mt-1"><NavCaret /></IconButton>
      <span className="mt-1 h-px w-[25px] bg-[#666a70]" />
      <IconButton label="Show motion" className="mt-1"><Svg w={24} h={24}><path d="M1 1h5v6H1ZM9.500 1h5v6h-5ZM18 1h5v6h-5ZM1 10h16v13H1Z" fill="#b6b8bb" stroke={s} /><path d="m6 12.500 7 4-7 4Z" fill={s} stroke="none" /></Svg></IconButton>
      <IconButton label="Navigation bar menu" className="mt-auto mr-[2px] mb-[2px] self-end"><Svg w={8} h={8}><circle cx="4" cy="4" r="4" fill="#50555c" stroke="none" /><path d="M2 3h4M2 5h4" stroke="#ddd" strokeWidth={0.900} /></Svg></IconButton>
    </div>
  );
}

function CommandLine() {
  return (
    <div className="absolute bottom-px left-[150px] flex h-[25px] w-[446px]">
      <div className="flex w-[55px] items-center justify-between rounded-l bg-[#2b3240] pr-[6px] pl-[3px]">
        <Svg w={6} h={17}><path d="M1 0v17M3 0v17M5 0v17" stroke="#a0a5ad" strokeDasharray="1 1" /></Svg>
        <IconButton label="Close command line" className="mr-1"><Svg w={9} h={9}><path d="m1 1 7 7M8 1 1 8" stroke="#c3c6ca" strokeWidth={1.800} /></Svg></IconButton>
        <IconButton label="Customize"><Svg w={14} h={14}><path d="m1 13 7-7" stroke="#c3c6ca" strokeWidth={2.500} /><path d="M7 4c0-3 3-4 5-3.500L10 3l1 1.500 3-1c0 3-3 4-5 3.500Z" fill="#c3c6ca" stroke="none" /></Svg></IconButton>
      </div>
      <label className="flex flex-1 items-center gap-[2px] rounded-r-sm bg-[#bcbec0] pr-[3px] pl-1">
        <Svg w={16} h={12}><path d="M.5.500h15v11H.5Z" fill="#aaacae" stroke="#44494f" /><path d="M1 1.500h14" stroke="#44494f" strokeWidth={2} /><path d="m2.500 4.500 3 2-3 2M7 9h4" stroke="#44494f" /></Svg>
        <Svg w={8} h={5}><path d="M0 0h8L4 4.500Z" fill="#44494f" stroke="none" /></Svg>
        <input aria-label="Command" placeholder="Type a command" className="ml-1 min-w-0 flex-1 bg-transparent font-['DejaVu_Sans_Mono',monospace] text-[12px] text-[#333] italic outline-none placeholder:text-[#5c6066]" />
        <Svg w={8} h={5}><path d="M0 4.500h8L4 0Z" fill="#44494f" stroke="none" /></Svg>
      </label>
    </div>
  );
}

function Canvas() {
  return (
    <main className="relative ml-1 min-w-0 flex-1 bg-[#212830]">
      <div className="flex h-7 items-center pl-[3px] text-[12px] text-[#e4e6e8]">
        <span>[−][Top][2D Wireframe]</span>
        <div className="mr-3 ml-auto flex items-center gap-[10px]">
          <IconButton label="Minimize viewport"><Svg w={10} h={10}><path d="M0 7.500h10" stroke="#fff" strokeWidth={3} /></Svg></IconButton>
          <IconButton label="Restore viewport"><Svg w={10} h={10}><path d="M1 3.500h6v5.500H1Z" stroke="#fff" strokeWidth={2} /><path d="M3 .5h6.500V7" stroke="#fff" /></Svg></IconButton>
          <IconButton label="Close viewport"><Svg w={9} h={9}><path d="m1 1 7 7M8 1 1 8" stroke="#fff" strokeWidth={2.200} /></Svg></IconButton>
        </div>
      </div>
      <ViewCube />
      <NavBar />
      <svg className="absolute bottom-[9px] left-2" width="76" height="76" viewBox="0 0 76 76" fill="none" stroke="#fff" aria-hidden="true">
        <path d="M5.500 20v51M5 71.500h51M1.500 66.500h9v9h-9Z" />
        <path d="m7 3 6 6 6-6M13 9v7M60 57l13 13M73 57 60 70" strokeWidth=".9" />
      </svg>
      <CommandLine />
    </main>
  );
}

/* ---------- right toolbar ---------- */
const railIcons: (React.ReactNode | null)[] = [
  <Svg><path d="M1 15V1h15" /><path d="M3 4h9c-1 4-4 6-7 7l-2 3Z" fill="#d9dbdf" stroke="none" /><path d="M4 11c3-2 7-4 8-8" stroke={B} /></Svg>,
  <Svg><path d="M1 0v15h15" strokeDasharray="2 1" /><path d="m1 3 9 5-7 5Z" fill="#c9ccd0" stroke="none" /><path d="m3 2c3 1 6 2 7 5" stroke={B} /><path d="M13 5 3 13" /></Svg>,
  <Svg><path d="M5 1v15" strokeDasharray="2 1" /><path d="M6 2c7 3 6 7 4 11L6 7Z" fill="#c9ccd0" stroke={B} /></Svg>,
  <Svg><path d="M4 1v14" strokeDasharray="2 1" /><path d="m4 2 9 3-8 5Z" fill="#c9ccd0" stroke={B} /><path d="M13 4 4 14" /></Svg>,
  <Svg><path d="M1 0h7v16H1ZM9 0l5 5H9Z" fill="#e2e2e2" stroke="none" /><path d="M1 7h8M5 3v9" stroke="#8f959e" /><path d="M8.500 8.500h7v7h-7ZM8.500 12h7M12 8.500v7" fill="#3b4453" /></Svg>,
  <Svg><circle cx="7" cy="7" r="7" fill="#6cc0fa" stroke="none" /><path d="M2 3c3-3 7 0 5 2S2 9 2 3Zm7 5c2-3 5-1 4 2l-3 2Z" fill="#e6f3fc" stroke="none" /><path d="M8.500 8.500h7v7h-7ZM8.500 12h7M12 8.500v7" fill="#3b4453" /></Svg>,
  <Svg><circle cx="8" cy="8" r="8" fill="#5aaee8" stroke="none" /><path d="M0 8h16M8 0v16M3 3c3 2 7 2 10 0M3 13c3-2 7-2 10 0" stroke="#d6ecfb" /><path d="M9 4h4v4H9ZM4 9h4v4H4Z" fill="#f0f0f0" stroke="#2f3a48" /></Svg>,
  <Svg><Target x={6} y={6} r={2.200} /><path d="M11 9v7M14 9v7M9 11h7M9 14h7" stroke={B} /></Svg>,
  <Svg><Target x={6} y={6} r={2.200} /><path d="m9 15 3-7 3 7M10 13h4" /></Svg>,
  <Svg><Target x={5} y={6} r={2.200} /><path d="M8 4v11l3-2 1 3 2-1-1-3h3Z" fill="#fff" stroke="none" /></Svg>,
  <Svg><Target x={5} y={5} r={2.200} /><circle cx="10" cy="10" r="3" fill="#9aa3ad" /><path d="m12 12 4 4" stroke="#f1c67d" strokeWidth={1.800} /></Svg>,
  <Svg><path d="M2 1v15" strokeDasharray="2 1" /><path d="M5 5h7v7H5Z" fill="#77818f" /><path d="m5 12 7-7" /><path d="M8 2h7v9" stroke={B} /></Svg>,
  <Svg><path d="M0 3h10M6 3v13" stroke={B} /><path d="M4 1h4v4H4Z" fill={B} stroke="none" /><path d="M10 3c7 1 7 8 1 9" strokeDasharray="3 1.500" /></Svg>,
  null,
  <Svg><path d="M0 6h8l-3 4v5l-2-1v-4Z" fill="#c9ccd0" stroke="none" /><path d="M8 0v4M6 2h5" /><path d="M8 3v11l3-2 2 3 2-1-2-3h3Z" fill="#fff" stroke="none" /></Svg>,
  null,
  <Svg><path d="M0 7h10M6 0v10" stroke={B} strokeDasharray="3 1" /><path d="M4 5h4v4H4Z" fill={B} stroke="none" /><path d="M10 6c7 0 7 6 3 8H7" strokeDasharray="2 1.500" /></Svg>,
  <Svg><path d="m0 4 4-4 4 4-1 5H0Z" fill="#d5d8dc" stroke="none" /><path d="M5 11h6c4-1 5 4 1 5H8" stroke={B} strokeDasharray="3 1" strokeWidth={1.500} /></Svg>,
  <Svg><Target x={5} y={5} r={2.300} /><path d="M6 11h5c5-1 6 4 1 5H8" stroke={B} strokeDasharray="3 1" strokeWidth={1.500} /></Svg>,
  null,
  <Svg><path d="M1 1v14h15" strokeDasharray="2 1" /><path d="M1 7h7v8" stroke={B} strokeDasharray="3 1" /><path d="M7 6h3v3H7Z" fill={B} stroke="none" /></Svg>,
  <Svg><path d="m1 6 5-5M2.500 1H6v3.500" /><path d="M2 7v8h12" strokeDasharray="2 1" /><path d="m5 14 7-8M13.500 6v8" stroke={B} strokeWidth={1.500} /></Svg>,
  <Svg><path d="M1 1v14h15" strokeDasharray="3 2" /></Svg>,
];

function RightRail() {
  return (
    <div className="mr-[7px] ml-[5px] flex h-[453px] w-6 shrink-0 flex-col items-center overflow-hidden border border-[#2a313d]">
      <Svg w={14} h={7}><path d="M0 3.500h14M0 5.500h14" stroke="#aab0b8" strokeDasharray="1 1" /></Svg>
      {railIcons.map((icon, i) =>
        icon === null ? (
          <span key={i} className="my-[2px] h-[2px] w-5 shrink-0 bg-[#f0f1f3]" />
        ) : (
          <IconButton key={i} label={`Transparent command ${i + 1}`} className="h-[22px] w-full">{icon}</IconButton>
        ),
      )}
    </div>
  );
}

/* ---------- status bar ---------- */
function LayoutTabs() {
  const shape = "[clip-path:polygon(0_0,100%_0,calc(100%-5px)_30%,calc(100%-9px)_80%,calc(100%-15px)_100%,15px_100%,9px_80%,5px_30%)]";
  return (
    <div className="flex items-start pl-[11px] text-[13px]">
      <button type="button" className={clsx("h-[17px] w-[64px] bg-[#3b4453] leading-4 font-bold text-white", shape)}>Model</button>
      <button type="button" className={clsx("h-[17px] w-[66px] bg-[#2c3440] leading-4 text-[#a9adb3]", shape)}>Layout1</button>
      <button type="button" className={clsx("h-[17px] w-[70px] bg-[#2c3440] leading-4 text-[#a9adb3]", shape)}>Layout2</button>
      <IconButton label="Add layout" className="ml-[2px] h-4 w-[22px] rounded-br-lg bg-[#2e3643]"><Svg w={8} h={8}><path d="M4 0v8M0 4h8" stroke="#a9aeb6" strokeWidth={1.800} /></Svg></IconButton>
    </div>
  );
}

function Group({ children, className }: Kids & { className?: string }) {
  return <div className={clsx("flex h-6 items-center bg-[#3b4453]", className)}>{children}</div>;
}

function Cell({ label, on, children }: Kids & { label: string; on?: boolean }) {
  return <IconButton label={label} className={clsx("h-[22px] w-6", on && "bg-[#5f90c5]")}>{children}</IconButton>;
}

function MenuCell({ label }: { label: string }) {
  return <IconButton label={label} className="h-[22px] w-[15px]"><Svg w={7} h={5}><path d="M0 .5h7L3.500 4.500Z" fill={W} stroke="none" /></Svg></IconButton>;
}

function StatusBar() {
  const star = "m8 0 2 6 1 3 5 6-6-2-2-2-2 2-6 2 5-6 1-3Z";
  return (
    <footer className="mx-1 flex h-[29px] items-start bg-[#212830] pt-px">
      <div className="w-[397px] shrink-0"><LayoutTabs /></div>
      <div className="flex flex-1 items-center gap-[3px] pt-px text-[12px] text-[#eef0f2]">
        <Group className="w-[47px] justify-center"><button type="button">MODEL</button></Group>
        <Group>
          <Cell label="Grid"><Svg><path d="M4 0v16M8 0v16M12 0v16M0 4h16M0 8h16M0 12h16" /></Svg></Cell>
          <Cell label="Snap"><Svg w={14} h={14}><path d="M1 2h13M1 7h13M1 12h13" strokeWidth={2} strokeDasharray="2 3" /></Svg></Cell>
          <MenuCell label="Snap menu" />
        </Group>
        <Group>
          <Cell label="Ortho"><Svg><path d="M1 0v15h15M1 9h6v6" strokeWidth={1.500} /></Svg></Cell>
          <Cell label="Polar tracking" on><Svg><path d="M14 6A6.500 6.500 0 1 0 14 10M7 8h9M7 8l5-6" strokeWidth={1.500} stroke="#fff" /></Svg></Cell>
          <MenuCell label="Polar menu" />
          <Cell label="Isometric drafting"><Svg><path d="m2 2 12 12" stroke="#cf6060" strokeWidth={1.300} /><path d="M8 0v16" stroke="#7fd07f" strokeWidth={1.300} /><circle cx="8" cy="8" r="1.500" fill="#3b4453" /></Svg></Cell>
          <MenuCell label="Isometric menu" />
        </Group>
        <Group className="-ml-px">
          <Cell label="Object snap tracking" on><Svg><path d="M15 1 1 15h15" stroke="#fff" strokeWidth={1.400} /><path d="M7 7h3v3H7Z" fill="#fff" stroke="none" /></Svg></Cell>
          <Cell label="Object snap" on><Svg><path d="M2.500 5v10.500h13V3H6" stroke="#fff" /><path d="M.5.500h4v4h-4Z" stroke="#fff" /></Svg></Cell>
          <MenuCell label="Object snap menu" />
        </Group>
        <Group>
          <Cell label="Annotation visibility" on><Svg><path d={star} fill="#fff" stroke="none" /><circle cx="13" cy="3" r="2.500" fill="#5f90c5" stroke="#fff" /></Svg></Cell>
          <Cell label="Auto scale"><Svg><path d={star} fill={W} stroke="none" /><path d="m15 0-5 5h4l-3 4" strokeWidth={1.400} /></Svg></Cell>
          <Cell label="Annotation scale"><Svg><path d={star} fill={W} stroke="none" /></Svg></Cell>
          <button type="button" className="flex w-[53px] items-center justify-between pr-1 pl-[3px]">1:1000 <Svg w={7} h={5}><path d="M0 .5h7L3.500 4.500Z" fill={W} stroke="none" /></Svg></button>
        </Group>
        <Group>
          <Cell label="Workspace"><Svg><circle cx="8" cy="8" r="4.500" strokeWidth={3} /><circle cx="8" cy="8" r="6.800" strokeWidth={2.400} strokeDasharray="2.670 2.670" /></Svg></Cell>
          <MenuCell label="Workspace menu" />
        </Group>
        <Group className="-ml-[2px]"><Cell label="Annotation monitor"><Svg><path d="M8 0v16M0 8h16" strokeWidth={2} /></Svg></Cell></Group>
        <Group className="ml-px w-[68px]">
          <Cell label="Elevation"><Svg><path d="M2 4c2-5 10-5 12 0" strokeDasharray="2 1" /><path d="m0 10 8 6 8-6-3-1H3Z" fill="#d5d8dc" stroke="none" /><path d="m0 7 8-4 8 4-8 5Z" fill="#62b5ef" stroke="#3b4453" /></Svg></Cell>
          <button type="button" className="flex-1">3.500</button>
        </Group>
        <Group className="-ml-[2px]"><Cell label="Isolate objects"><Svg><path d="M.5.500h6v6h-6ZM8 8.500l-4 6.500h8Z" /><circle cx="12.500" cy="6.500" r="3" /></Svg></Cell></Group>
        <Group className="-ml-px">
          <Cell label="Clean screen"><Svg><path d="M.5 2.500h15v11H.5ZM9 7l4-2.500M10 4.500h3V7M7 9l-4 2.500M3 9v2.500h3" strokeWidth={1.400} /></Svg></Cell>
          <Cell label="Customization"><Svg><path d="M0 2h16M0 8h16M0 14h16" strokeWidth={2} /></Svg></Cell>
        </Group>
      </div>
    </footer>
  );
}

export default function App() {
  return (
    <div className="flex min-h-screen flex-col bg-[#3b4453] pb-1 font-['Open_Sans','Noto_Sans',sans-serif]">
      <div className="bg-[#212830]">
        <div className="flex">
          <button type="button" aria-label="Application menu" className="mt-1 ml-1 flex h-[41px] w-[41px] shrink-0 flex-col items-center border-2 border-black bg-gradient-to-b from-[#c4c6c9] to-[#7e8084]">
            <Svg w={36} h={28}>
              <defs><linearGradient id="c" x1="0" y1="0" x2="1" y2="1"><stop offset="0" stopColor="#53b9ea" /><stop offset="1" stopColor="#1b76b5" /></linearGradient></defs>
              <path d="M26 2C14-2 6 4 6 14c0 9 6 14 14 12l6-3-2-5c-5 3-10 2-10-4C14 7 18 5 25 9Z" fill="url(#c)" stroke="none" />
              <path d="M26 2c-6-1-12 1-13 6-1 7 0 13 7 18-8 2-14-3-14-12C6 4 14-2 26 2Z" fill="#9adcf7" fillOpacity=".45" stroke="none" />
              <path d="M28 16h7l-3.500 4Z" fill="#333" stroke="none" />
            </Svg>
            <span className="text-[8px] leading-[8px] font-bold text-black">C3D</span>
          </button>
          <div className="min-w-0 flex-1">
            <TitleBar />
            <RibbonTabs />
          </div>
        </div>
        <Ribbon />
      </div>
      <FileTabs />
      <div className="flex flex-1 pt-[5px]">
        <div className="-mt-[5px] flex"><Toolspace /></div>
        <Canvas />
        <RightRail />
      </div>
      <StatusBar />
    </div>
  );
}
